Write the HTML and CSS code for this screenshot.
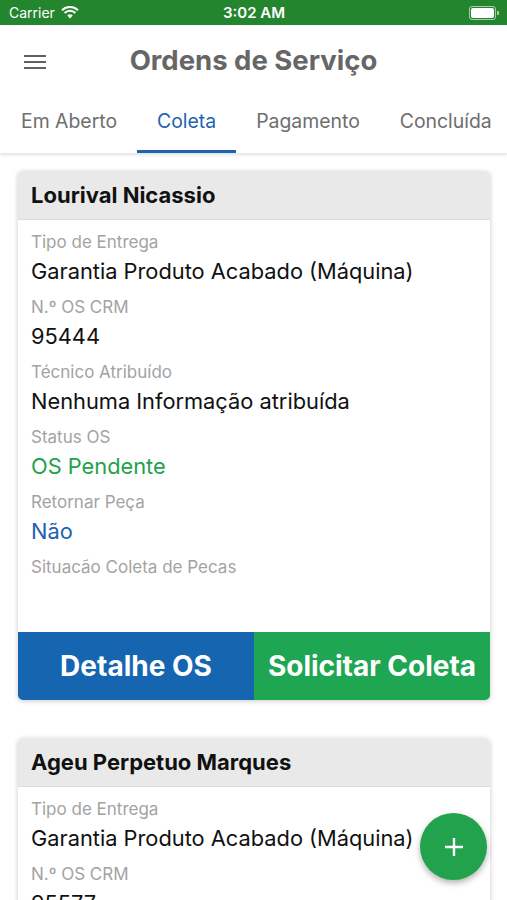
FILE: index.html
```html
<!DOCTYPE html>
<html lang="pt-br">

<head>
    <meta charset="UTF-8">
    <meta name="viewport" content="width=device-width, initial-scale=1.0">
    <title>Ordens de Serviço</title>
    <link rel="stylesheet" href="styles.css">
</head>

<body>

    <div class="status-bar">
        <div class="status-left">
            <span>Carrier</span>
            <svg class="wifi" width="18" height="13" viewBox="0 0 18 13">
                <path d="M9 12.5 L6.2 9.6 A4 4 0 0 1 11.8 9.6 Z" fill="#fff" />
                <path d="M3.6 7 A7.6 7.6 0 0 1 14.4 7" stroke="#fff" stroke-width="2" fill="none" />
                <path d="M1 4.2 A11.4 11.4 0 0 1 17 4.2" stroke="#fff" stroke-width="2" fill="none" />
            </svg>
        </div>
        <div class="status-time">3:02 AM</div>
        <div class="status-right">
            <div class="battery"><div class="battery-fill"></div></div>
            <div class="battery-tip"></div>
        </div>
    </div>

    <div class="topo">
        <div class="menu">
            <span></span><span></span><span></span>
        </div>
        <h1>Ordens de Serviço</h1>
        <div></div>
    </div>

    <div class="abas">
        <div class="aba">Em Aberto</div>
        <div class="aba ativa">Coleta</div>
        <div class="aba">Pagamento</div>
        <div class="aba">Concluída</div>
    </div>

    <div class="lista">
        <div class="card">
            <div class="card-topo">Lourival Nicassio</div>
            <div class="card-corpo">
                <div class="rotulo">Tipo de Entrega</div>
                <div class="valor">Garantia Produto Acabado (Máquina)</div>
                <div class="rotulo">N.º OS CRM</div>
                <div class="valor">95444</div>
                <div class="rotulo">Técnico Atribuído</div>
                <div class="valor">Nenhuma Informação atribuída</div>
                <div class="rotulo">Status OS</div>
                <div class="valor verde">OS Pendente</div>
                <div class="rotulo">Retornar Peça</div>
                <div class="valor azul">Não</div>
                <div class="rotulo">Situacão Coleta de Pecas</div>
                <div class="valor"></div>
            </div>
            <div class="botoes">
                <button class="btn-detalhe">Detalhe OS</button>
                <button class="btn-coleta">Solicitar Coleta</button>
            </div>
        </div>

        <div class="card">
            <div class="card-topo">Ageu Perpetuo Marques</div>
            <div class="card-corpo">
                <div class="rotulo">Tipo de Entrega</div>
                <div class="valor">Garantia Produto Acabado (Máquina)</div>
                <div class="rotulo">N.º OS CRM</div>
                <div class="valor">95577</div>
                <div class="rotulo">Técnico Atribuído</div>
                <div class="valor">Nenhuma Informação atribuída</div>
            </div>
        </div>
    </div>

    <button class="fab">
        <svg width="22" height="22" viewBox="0 0 22 22">
            <path d="M11 2 V20 M2 11 H20" stroke="#fff" stroke-width="2.4" />
        </svg>
    </button>

</body>

</html>
```

FILE: styles.css
```css
body {
    margin: 0;
    height: 900px;
    overflow: hidden;
    background-color: #ffffff;
    font-family: Inter, "Liberation Sans", sans-serif;
    position: relative;
}

.status-bar {
    height: 25px;
    background-color: #24852f;
    color: white;
    display: flex;
    align-items: center;
    justify-content: space-between;
    padding: 0 8px 0 9px;
    font-size: 14px;
}

.status-left {
    display: flex;
    align-items: center;
    gap: 6px;
    width: 120px;
}

.status-time {
    font-weight: 600;
    font-size: 15px;
}

.status-right {
    display: flex;
    align-items: center;
    justify-content: flex-end;
    width: 120px;
}

.battery {
    width: 23px;
    height: 10px;
    border: 1px solid rgba(255, 255, 255, 0.6);
    border-radius: 3px;
    padding: 1px;
}

.battery-fill {
    width: 100%;
    height: 100%;
    background-color: white;
    border-radius: 2px;
}

.battery-tip {
    width: 2px;
    height: 4px;
    background-color: rgba(255, 255, 255, 0.6);
    border-radius: 0 1px 1px 0;
    margin-left: 1px;
}

.topo {
    height: 75px;
    display: grid;
    grid-template-columns: 70px 1fr 70px;
    align-items: center;
}

.menu {
    display: flex;
    flex-direction: column;
    gap: 4px;
    padding-left: 24px;
    margin-top: -2px;
}

.menu span {
    display: block;
    width: 22px;
    height: 2px;
    background-color: #616161;
}

h1 {
    margin: 0;
    text-align: center;
    font-size: 27.5px;
    font-weight: 700;
    color: #666666;
    margin-top: -6px;
}

.abas {
    display: flex;
    height: 53px;
    padding-left: 1px;
    box-shadow: 0 2px 3px rgba(0, 0, 0, 0.12);
    position: relative;
}

.aba {
    padding: 0 20px;
    font-size: 19.4px;
    color: #6e6e6e;
    display: flex;
    align-items: center;
    margin-top: -8px;
    white-space: nowrap;
    border-bottom: 3px solid transparent;
}

.aba.ativa {
    color: #1e63ae;
    border-bottom-color: #1e63ae;
    margin-top: 0;
    padding-bottom: 8px;
    height: 42px;
}

.lista {
    padding: 18px 17px 0 18px;
    display: flex;
    flex-direction: column;
    gap: 38px;
}

.card {
    border-radius: 5px;
    box-shadow: 0 1px 5px rgba(0, 0, 0, 0.22);
    overflow: hidden;
    background-color: white;
}

.card-topo {
    background-color: #e9e9e9;
    height: 48px;
    border-bottom: 1px solid #dddddd;
    display: flex;
    align-items: center;
    padding-left: 13px;
    font-size: 22px;
    font-weight: 700;
    color: #111111;
}

.card-corpo {
    padding: 11px 13px 11px 13px;
}

.rotulo {
    font-size: 17px;
    line-height: 22px;
    color: #a3a3a3;
}

.valor {
    font-size: 21.8px;
    line-height: 36px;
    color: #111111;
    min-height: 36px;
    margin-bottom: 7px;
}

.valor.verde {
    color: #22a24d;
}

.valor.azul {
    color: #1e63ae;
}

.botoes {
    display: flex;
    height: 68px;
}

.botoes button {
    flex: 1;
    border: none;
    color: white;
    font-family: Inter, "Liberation Sans", sans-serif;
    font-size: 28px;
    font-weight: 700;
}

.btn-detalhe {
    background-color: #1565b1;
}

.btn-coleta {
    background-color: #1fa653;
}

.fab {
    position: absolute;
    left: 420px;
    top: 813px;
    width: 67px;
    height: 67px;
    border-radius: 50%;
    border: none;
    background-color: #22a24d;
    box-shadow: 0 3px 6px rgba(0, 0, 0, 0.3);
    display: flex;
    align-items: center;
    justify-content: center;
}
```
